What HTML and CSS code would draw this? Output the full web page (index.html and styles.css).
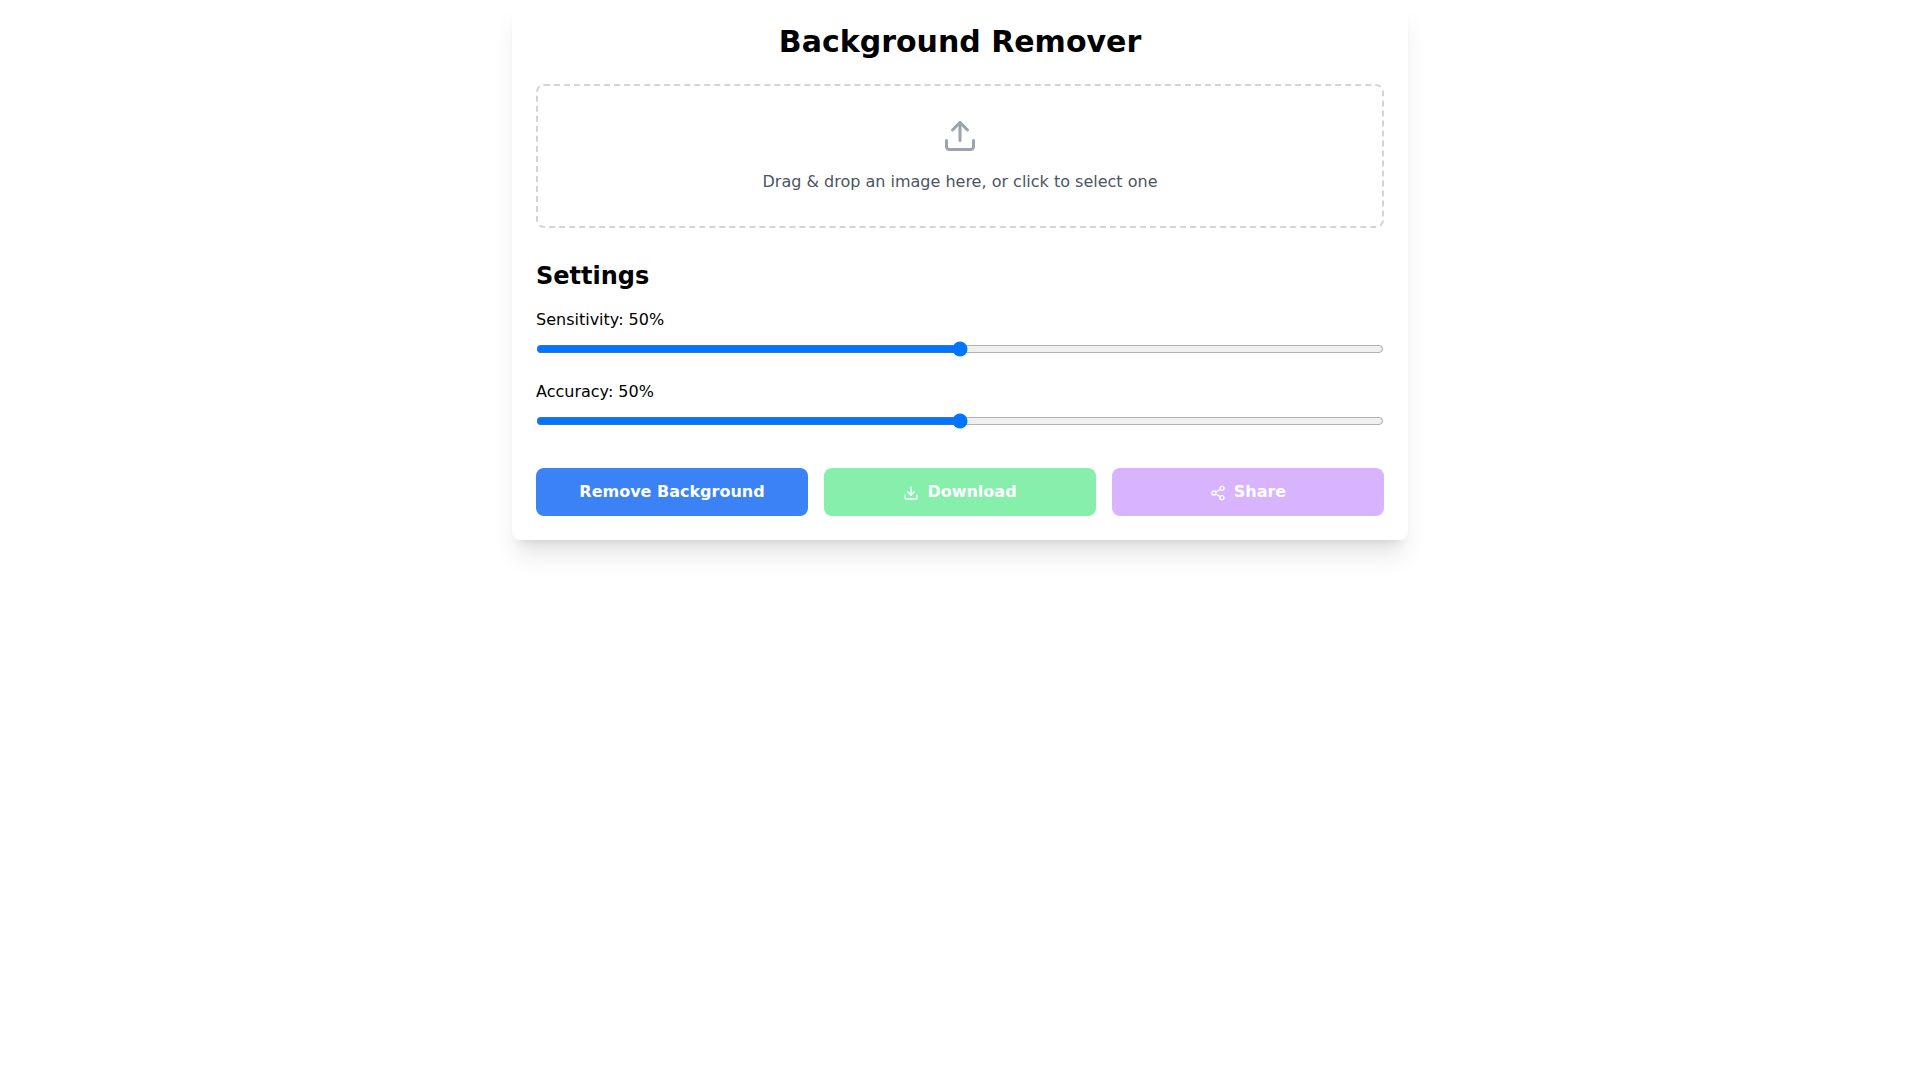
FILE: index.html
```html
<!DOCTYPE html>
<html lang="en">
<head>
  <meta charset="UTF-8">
  <meta name="viewport" content="width=device-width, initial-scale=1.0">
  <title>Background Remover</title>
  <link rel="stylesheet" href="styles.css">
</head>
<body>
  <main class="container">
    <h1>Background Remover</h1>

    <label class="dropzone" for="imageInput">
      <input id="imageInput" class="file-input" type="file" accept="image/*">
      <svg class="upload-icon" viewBox="0 0 24 24" aria-hidden="true">
        <path d="M21 15v4a2 2 0 0 1-2 2H5a2 2 0 0 1-2-2v-4"/>
        <polyline points="17 8 12 3 7 8"/>
        <line x1="12" y1="3" x2="12" y2="15"/>
      </svg>
      <span>Drag &amp; drop an image here, or click to select one</span>
    </label>

    <section class="settings">
      <h2>Settings</h2>
      <div class="form-group">
        <label for="sensitivity">Sensitivity: <span id="sensitivityValue">50</span>%</label>
        <input id="sensitivity" type="range" min="0" max="100" value="50">
      </div>
      <div class="form-group">
        <label for="accuracy">Accuracy: <span id="accuracyValue">50</span>%</label>
        <input id="accuracy" type="range" min="0" max="100" value="50">
      </div>
    </section>

    <div class="actions">
      <button type="button" class="btn-remove">Remove Background</button>
      <button type="button" class="btn-download" disabled>
        <svg class="btn-icon" viewBox="0 0 24 24" aria-hidden="true">
          <path d="M21 15v4a2 2 0 0 1-2 2H5a2 2 0 0 1-2-2v-4"/>
          <polyline points="7 10 12 15 17 10"/>
          <line x1="12" y1="15" x2="12" y2="3"/>
        </svg>Download
      </button>
      <button type="button" class="btn-share" disabled>
        <svg class="btn-icon" viewBox="0 0 24 24" aria-hidden="true">
          <circle cx="18" cy="5" r="3"/>
          <circle cx="6" cy="12" r="3"/>
          <circle cx="18" cy="19" r="3"/>
          <line x1="8.59" y1="13.51" x2="15.42" y2="17.49"/>
          <line x1="15.41" y1="6.51" x2="8.59" y2="10.49"/>
        </svg>Share
      </button>
    </div>
  </main>
  <script>
    // Keep the percentages in step with the sliders
    ['sensitivity', 'accuracy'].forEach(function(id) {
      document.getElementById(id).addEventListener('input', function(e) {
        document.getElementById(id + 'Value').textContent = e.target.value;
      });
    });
  </script>
</body>
</html>
```
FILE: styles.css
```css
* {
  box-sizing: border-box;
}
body {
  min-height: 100vh;
  margin: 0;
  background: #fff;
  color: #000;
  font-family: "DejaVu Sans", sans-serif;
  font-size: 16px;
  line-height: 24px;
}
.container {
  max-width: 896px;
  margin: 0 auto;
  padding: 24px;
  background: #fff;
  border-radius: 8px;
  box-shadow: 0 20px 25px -5px rgba(0,0,0,0.1), 0 8px 10px -6px rgba(0,0,0,0.1);
}
h1 {
  margin: 0 0 24px;
  font-size: 30px;
  line-height: 36px;
  font-weight: 700;
  text-align: center;
}
h2 {
  margin: 0 0 16px;
  font-size: 24px;
  line-height: 32px;
  font-weight: 700;
}
.dropzone {
  display: flex;
  flex-direction: column;
  align-items: center;
  gap: 16px;
  padding: 32px;
  border: 2px dashed #d1d5db;
  border-radius: 8px;
  color: #4b5563;
  cursor: pointer;
}
.file-input {
  display: none;
}
.upload-icon, .btn-icon {
  fill: none;
  stroke: currentColor;
  stroke-width: 2;
  stroke-linecap: round;
  stroke-linejoin: round;
}
.upload-icon {
  width: 36px;
  height: 36px;
  color: #9ca3af;
}
.settings {
  margin: 32px 0;
}
.form-group {
  margin-bottom: 16px;
}
.form-group label {
  display: block;
  margin-bottom: 8px;
}
input[type="range"] {
  width: 100%;
  margin: 0;
}
.actions {
  display: flex;
  gap: 16px;
}
button {
  flex: 1;
  padding: 12px 24px;
  border: none;
  border-radius: 8px;
  color: #fff;
  font: inherit;
  font-weight: 700;
  text-align: center;
  cursor: pointer;
}
button:disabled {
  cursor: not-allowed;
}
.btn-icon {
  width: 16px;
  height: 16px;
  margin-right: 8px;
  vertical-align: middle;
}
.btn-remove {
  background-color: #3b82f6;
}
.btn-download {
  background-color: #86efac;
}
.btn-share {
  background-color: #d8b4fe;
}
```
